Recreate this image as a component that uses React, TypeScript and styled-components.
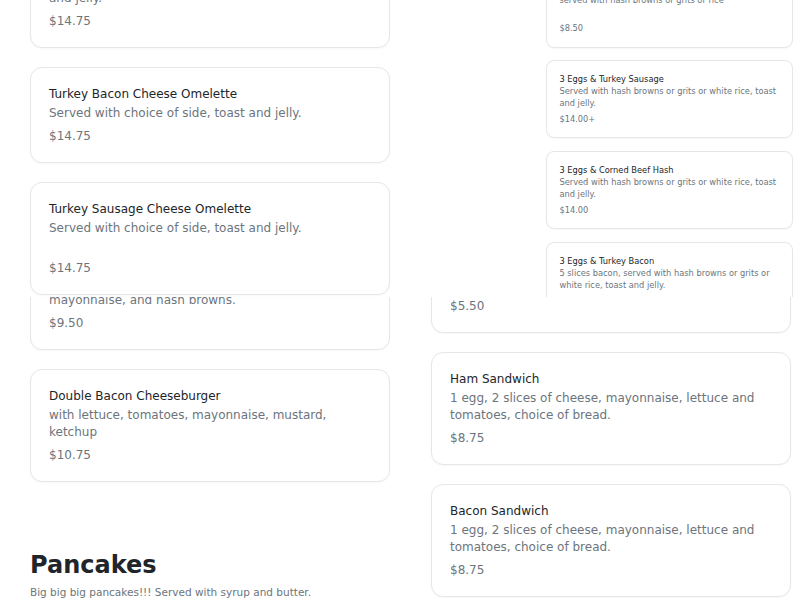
import React from "react";
import styled, { createGlobalStyle } from "styled-components";

const GlobalStyle = createGlobalStyle`
  html, body { margin: 0; padding: 0; background: #ffffff; }
  body { font-family: "DejaVu Sans", "Liberation Sans", sans-serif; }
`;

type Item = { title: string; desc: string; price: string; minLines?: number };

const Page = styled.div`
  position: relative;
  width: 800px;
  height: 600px;
  overflow: hidden;
  background: #ffffff;
`;

const Columns = styled.div<{ $top: number }>`
  display: grid;
  grid-template-columns: 360px 360px;
  column-gap: 41px;
  padding: ${(p) => p.$top}px 9px 0 30px;
  align-items: start;
`;

const Stack = styled.div`
  display: flex;
  flex-direction: column;
  gap: 19px;
`;

const Card = styled.div`
  border: 1px solid #e4e6e9;
  border-radius: 12px;
  padding: 17px 18px 17px 18px;
  background: #ffffff;
  box-shadow: 0 1px 2px rgba(0, 0, 0, 0.03);
`;

const ItemTitle = styled.div`
  font-size: 12px;
  line-height: 18px;
  color: #212529;
`;

const ItemDesc = styled.div<{ $minLines: number }>`
  margin-top: 2px;
  font-size: 12px;
  line-height: 17px;
  color: #6c757d;
  white-space: pre-line;
  min-height: ${(p) => p.$minLines * 17}px;
`;

const ItemPrice = styled.div`
  margin-top: 5px;
  font-size: 12px;
  line-height: 18px;
  color: #6c757d;
`;

const Section = styled.div`
  margin-top: 50px;
`;

const SectionTitle = styled.h2`
  margin: 0;
  font-size: 24px;
  line-height: 29px;
  font-weight: 700;
  color: #212529;
`;

const SectionNote = styled.p`
  margin: 4px 0 0 0;
  font-size: 10.5px;
  line-height: 16px;
  color: #6c757d;
`;

const Overlay = styled.div`
  position: absolute;
  top: 0;
  left: 0;
  right: 0;
  height: 297px;
  overflow: hidden;
  background: #ffffff;
  z-index: 2;
`;

const OverlayRow = styled.div`
  display: flex;
  align-items: flex-start;
  gap: 156px;
  padding-left: 30px;
`;

const OverlayStack = styled.div<{ $shift: number; $zoom: number; $width: number; $gap: number }>`
  display: flex;
  flex-direction: column;
  gap: ${(p) => p.$gap}px;
  width: ${(p) => p.$width}px;
  margin-top: ${(p) => p.$shift}px;
  zoom: ${(p) => p.$zoom};
  flex-shrink: 0;
`;

const MenuCard: React.FC<{ item: Item }> = ({ item }) => (
  <Card>
    <ItemTitle>{item.title}</ItemTitle>
    <ItemDesc $minLines={item.minLines ?? 1}>{item.desc}</ItemDesc>
    <ItemPrice>{item.price}</ItemPrice>
  </Card>
);

const overlayLeft: Item[] = [
  {
    title: "Ham Cheese Omelette",
    desc: "Served with choice of side, hash browns or rice, toast\nand jelly.",
    price: "$14.75",
  },
  {
    title: "Turkey Bacon Cheese Omelette",
    desc: "Served with choice of side, toast and jelly.",
    price: "$14.75",
  },
  {
    title: "Turkey Sausage Cheese Omelette",
    desc: "Served with choice of side, toast and jelly.",
    price: "$14.75",
    minLines: 2,
  },
];

const overlayRight: Item[] = [
  {
    title: "3 Eggs Any Style",
    desc: "served with hash browns or grits or rice",
    price: "$8.50",
    minLines: 2,
  },
  {
    title: "3 Eggs & Turkey Sausage",
    desc: "Served with hash browns or grits or white rice, toast and jelly.",
    price: "$14.00+",
  },
  {
    title: "3 Eggs & Corned Beef Hash",
    desc: "Served with hash browns or grits or white rice, toast and jelly.",
    price: "$14.00",
  },
  {
    title: "3 Eggs & Turkey Bacon",
    desc: "5 slices bacon, served with hash browns or grits or white rice, toast and jelly.",
    price: "$14.00",
  },
];

const baseLeft: Item[] = [
  {
    title: "Bacon Cheeseburger",
    desc: "with lettuce, tomatoes, onions, pickles,\nmayonnaise, and hash browns.",
    price: "$9.50",
  },
  {
    title: "Double Bacon Cheeseburger",
    desc: "with lettuce, tomatoes, mayonnaise, mustard, ketchup",
    price: "$10.75",
  },
];

const baseRight: Item[] = [
  {
    title: "Egg Sandwich",
    desc: "1 egg, choice of bread.",
    price: "$5.50",
  },
  {
    title: "Ham Sandwich",
    desc: "1 egg, 2 slices of cheese, mayonnaise, lettuce and tomatoes, choice of bread.",
    price: "$8.75",
  },
  {
    title: "Bacon Sandwich",
    desc: "1 egg, 2 slices of cheese, mayonnaise, lettuce and tomatoes, choice of bread.",
    price: "$8.75",
  },
];

export default function App() {
  return (
    <>
      <GlobalStyle />
      <Page>
        <Columns $top={237}>
          <Stack>
            {baseLeft.map((it) => (
              <MenuCard key={it.title} item={it} />
            ))}
            <Section>
              <SectionTitle>Pancakes</SectionTitle>
              <SectionNote>Big big big pancakes!!! Served with syrup and butter.</SectionNote>
            </Section>
          </Stack>
          <Stack>
            {baseRight.map((it) => (
              <MenuCard key={it.title} item={it} />
            ))}
          </Stack>
        </Columns>
        <Overlay>
          <OverlayRow>
            <OverlayStack $shift={-65} $zoom={1} $width={360} $gap={19}>
              {overlayLeft.map((it) => (
                <MenuCard key={it.title} item={it} />
              ))}
            </OverlayStack>
            <OverlayStack $shift={-45} $zoom={0.69} $width={358} $gap={18}>
              {overlayRight.map((it) => (
                <MenuCard key={it.title} item={it} />
              ))}
            </OverlayStack>
          </OverlayRow>
        </Overlay>
      </Page>
    </>
  );
}
